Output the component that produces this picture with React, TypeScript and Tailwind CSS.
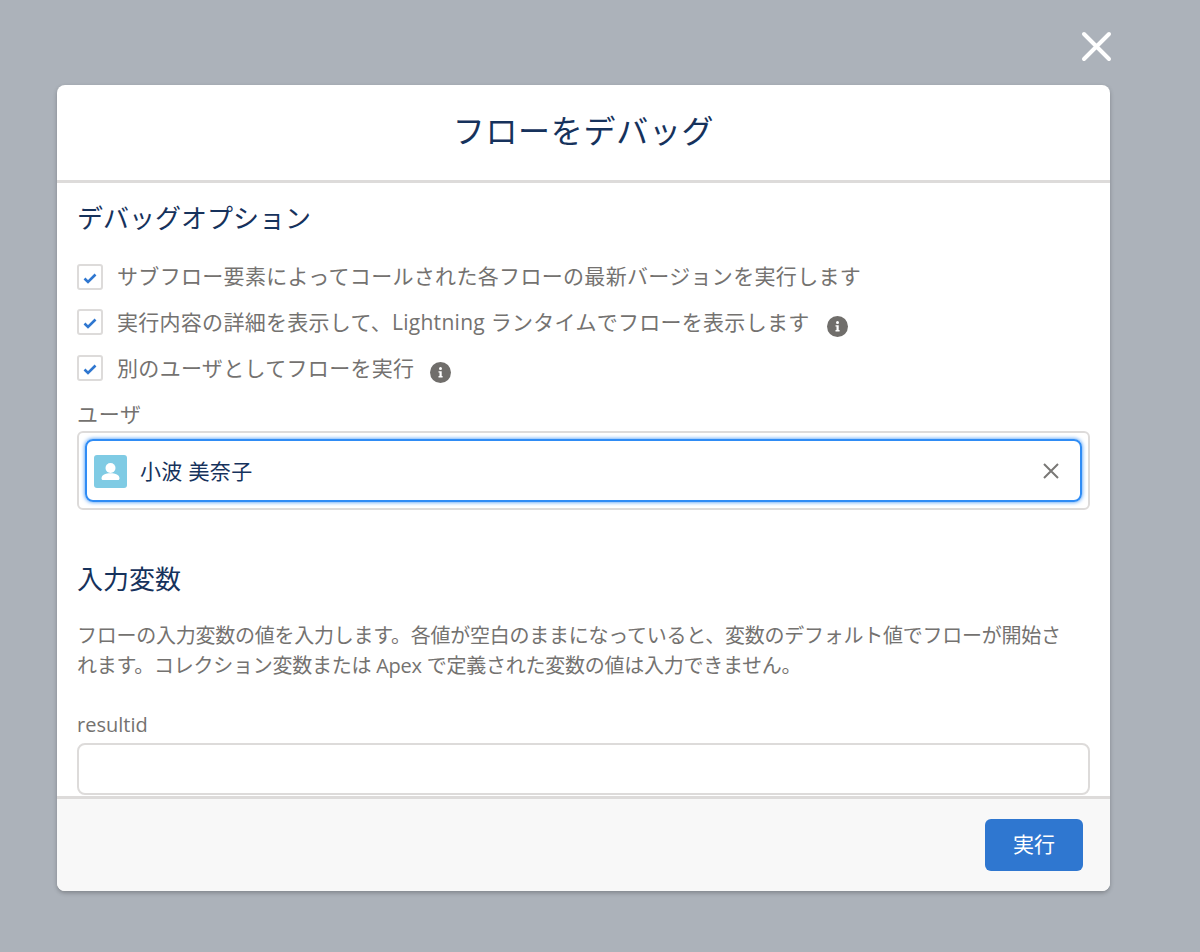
const font = { fontFamily: '"Open Sans", "Noto Sans CJK JP", sans-serif' };

function Check({ className = "" }: { className?: string }) {
  return (
    <span className={`${className} flex w-[26px] h-[26px] shrink-0 items-center justify-center rounded-[3px] border-2 border-[#dddbda] bg-white`}>
      <svg width="14" height="12" viewBox="0 0 14 12" className="mt-[2px]">
        <path d="M1.5 6.5 L5 10 L12.5 2.5" fill="none" stroke="#2f77d0" strokeWidth="2.6" />
      </svg>
    </span>
  );
}

function Info() {
  return (
    <svg width="21" height="21" viewBox="0 0 21 21" className="shrink-0">
      <circle cx="10.5" cy="10.5" r="10.5" fill="#706e6b" />
      <circle cx="10.5" cy="6.4" r="1.5" fill="#fff" />
      <path d="M8.5 9.2h3.2v4.900h.9v1.300H8.500v-1.300h1v-3.600h-1z" fill="#fff" />
    </svg>
  );
}

export default function App() {
  return (
    <div className="relative h-[952px] w-[1200px] overflow-hidden bg-[#acb2ba] pl-[57px] pt-[85px]" style={font}>
      <svg width="32" height="32" viewBox="0 0 32 32" className="absolute left-[1081px] top-[31px]">
        <path d="M3 3 L28 28 M28 3 L3 28" stroke="#fff" strokeWidth="4" strokeLinecap="round" />
      </svg>
      <div className="flex h-[806px] w-[1053px] flex-col overflow-hidden rounded-[8px] bg-white shadow-[0_2px_4px_rgba(0,0,0,0.25)]">
        <div className="flex h-[98px] shrink-0 items-center justify-center border-b-[3px] border-[#dddbda] pb-[3px]">
          <h1 className="text-[32px] font-normal leading-none tracking-[0.7px] text-[#16325c]">フローをデバッグ</h1>
        </div>
        <div className="min-h-0 flex-1 overflow-hidden pl-[20px] pr-[20px]">
          <h2 className="mt-[18px] text-[26px] leading-[34px] text-[#16325c]">デバッグオプション</h2>
          <div className="mt-[26px] flex items-center gap-[14px] text-[21px] leading-[30px] text-[#747270]">
            <Check className="mt-[2px]" />
            <span className="tracking-[0.32px]">サブフロー要素によってコールされた各フローの最新バージョンを実行します</span>
          </div>
          <div className="mt-[16px] flex items-center gap-[14px] text-[21px] leading-[30px] text-[#747270]">
            <Check />
            <span className="tracking-[0.28px]">実行内容の詳細を表示して、Lightning ランタイムでフローを表示します</span>
            <span className="ml-[4px] mt-[9px] flex"><Info /></span>
          </div>
          <div className="mt-[16px] flex items-center gap-[14px] text-[21px] leading-[30px] text-[#747270]">
            <Check />
            <span className="tracking-[0.32px]">別のユーザとしてフローを実行</span>
            <span className="ml-[2px] mt-[9px] flex"><Info /></span>
          </div>
          <div className="mt-[16px] text-[21px] leading-[30px] tracking-[0.7px] text-[#747270]">ユーザ</div>
          <div className="mt-[2px] rounded-[6px] border-2 border-[#dddbda] bg-white p-[6px]">
            <div className="flex h-[63px] items-center rounded-[8px] border-2 border-[#2f8cf5] pl-[7px] pr-[21px] shadow-[0_0_4px_#2f8cf5]">
              <span className="mt-[2px] flex h-[33px] w-[33px] items-center justify-center rounded-[3px] bg-[#7fcbe4]">
                <svg width="25" height="25" viewBox="0 0 25 25">
                  <circle cx="12.5" cy="9" r="5" fill="#fff" />
                  <path d="M3.5 19.5c0-3.6 4-5.2 9-5.2s9 1.6 9 5.2c0 .9-.6 1.5-1.5 1.5H5c-.9 0-1.500-.6-1.500-1.500z" fill="#fff" />
                </svg>
              </span>
              <span className="ml-[13px] mt-[2px] flex-1 text-[21px] tracking-[0.35px] text-[#16325c]">小波 美奈子</span>
              <svg width="16" height="16" viewBox="0 0 16 16">
                <path d="M1 1 L15 15 M15 1 L1 15" stroke="#7a7876" strokeWidth="2" />
              </svg>
            </div>
          </div>
          <h2 className="mt-[52px] text-[26px] leading-[34px] text-[#16325c]">入力変数</h2>
          <p className="mt-[25px] pr-[20px] text-[20px] leading-[30px] tracking-[-0.25px] text-[#747270]">
            フローの入力変数の値を入力します。各値が空白のままになっていると、変数のデフォルト値でフローが開始されます。コレクション変数または Apex で定義された変数の値は入力できません。
          </p>
          <div className="mt-[29px] text-[20px] leading-[30px] text-[#747270]">resultid</div>
          <div className="mt-[3px] h-[52px] rounded-[8px] border-2 border-[#dddbda] bg-white" />
        </div>
        <div className="flex h-[95px] shrink-0 items-start justify-end border-t-[3px] border-[#dddbda] bg-[#f8f8f8] pr-[27px] pt-[20px]">
          <button className="h-[52px] w-[98px] rounded-[6px] bg-[#2f77d0] text-[21px] text-white">実行</button>
        </div>
      </div>
    </div>
  );
}
